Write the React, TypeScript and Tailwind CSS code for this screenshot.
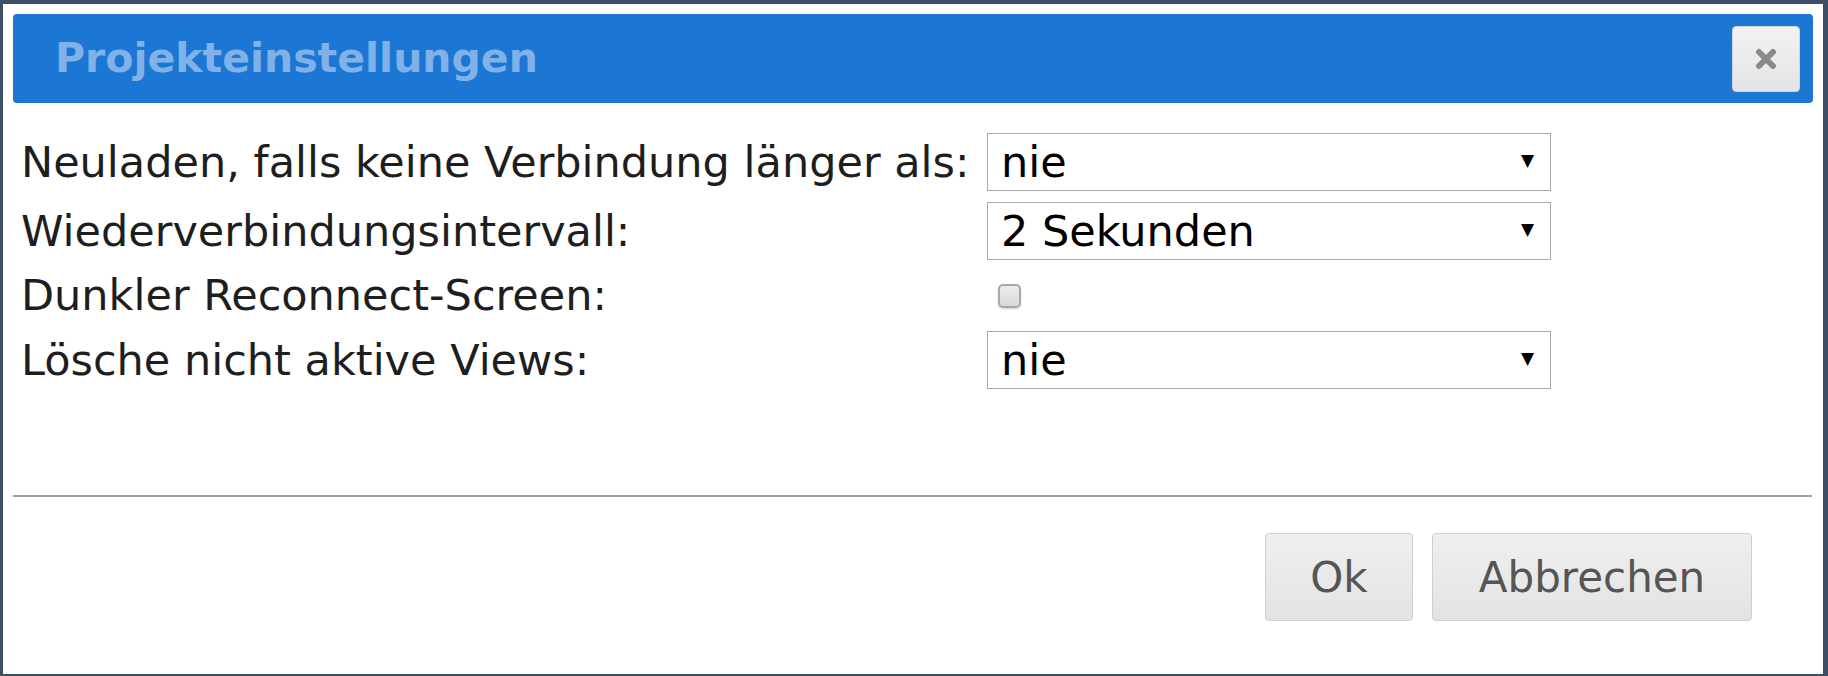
import { useState } from "react";

const font = { fontFamily: '"DejaVu Sans", Verdana, sans-serif' };

function Select({ value }: { value: string }) {
  return (
    <div className="relative w-[564px] h-[58px] border border-[#a9a9a9] bg-white flex items-center pl-[13px]">
      <span className="text-[43px] leading-none text-black">{value}</span>
      <span className="absolute right-[16px] top-[18px] text-[17px] leading-none text-black">▼</span>
    </div>
  );
}

export default function App() {
  const [dark, setDark] = useState(false);

  return (
    <div className="w-[1828px] h-[676px] bg-[#3d4e66] pt-[4px] pl-[3px] pr-[5px] pb-[2px]" style={font}>
      <div className="h-full bg-white flex flex-col px-[10px] pt-[10px]">
        {/* Title bar */}
        <div className="h-[89px] bg-[#1b77d3] rounded-[4px] flex items-center justify-between pl-[42px] pr-[13px]">
          <span className="text-[41px] font-bold text-[#80b2e9] leading-none">Projekteinstellungen</span>
          <button className="w-[68px] h-[66px] rounded-[4px] border border-[#d4d4d4] bg-gradient-to-b from-[#f2f2f2] to-[#e4e4e4] flex items-center justify-center">
            <svg width="22" height="22" viewBox="0 0 22 22">
              <path d="M4 4 L18 18 M18 4 L4 18" stroke="#8a8a8a" strokeWidth="6" strokeLinecap="round" />
            </svg>
          </button>
        </div>

        {/* Settings */}
        <div className="mt-[30px] pl-[8px] grid grid-cols-[966px_564px] gap-y-[11px] items-center text-[43px] text-[#1e1e1e] leading-none">
          <span>Neuladen, falls keine Verbindung länger als:</span>
          <Select value="nie" />
          <span>Wiederverbindungsintervall:</span>
          <Select value="2 Sekunden" />
          <span>Dunkler Reconnect-Screen:</span>
          <div className="h-[49px] flex items-center pl-[11px]">
            <button
              onClick={() => setDark(!dark)}
              className="w-[23px] h-[24px] rounded-[5px] border-2 border-[#a8a8a8] bg-gradient-to-b from-[#ececec] to-[#d9d9d9] shadow-[0_1px_2px_rgba(0,0,0,0.2)]"
            />
          </div>
          <span>Lösche nicht aktive Views:</span>
          <Select value="nie" />
        </div>

        <div className="mt-[106px] h-[2px] bg-[#a3a3a3] mr-[1px]" />

        {/* Buttons */}
        <div className="mt-[36px] flex justify-end gap-[19px] pr-[61px]">
          <button className="w-[148px] h-[88px] rounded-[4px] border border-[#cfcfcf] bg-gradient-to-b from-[#efefef] to-[#e3e3e3] text-[42px] text-[#555]">
            Ok
          </button>
          <button className="w-[320px] h-[88px] rounded-[4px] border border-[#cfcfcf] bg-gradient-to-b from-[#efefef] to-[#e3e3e3] text-[42px] text-[#555]">
            Abbrechen
          </button>
        </div>
      </div>
    </div>
  );
}
